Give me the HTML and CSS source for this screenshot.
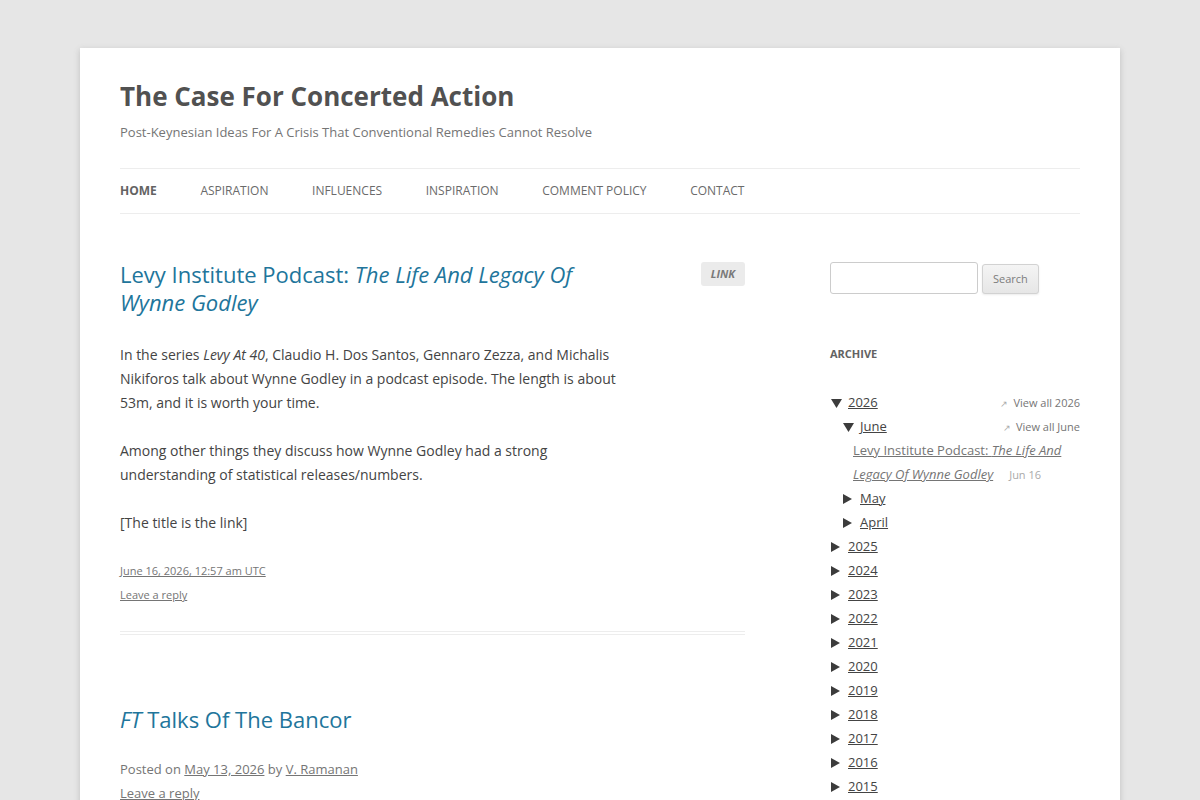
FILE: index.html
```html
<!DOCTYPE html>
<html lang="en">
<head>
<meta charset="utf-8">
<title>The Case For Concerted Action</title>
<link rel="stylesheet" href="styles.css">
</head>
<body>
<div class="site">
  <header class="site-header">
    <h1 class="site-title"><a href="#">The Case For Concerted Action</a></h1>
    <h2 class="site-description">Post-Keynesian Ideas For A Crisis That Conventional Remedies Cannot Resolve</h2>
    <nav class="main-navigation">
      <ul class="nav-menu">
        <li class="current-menu-item"><a href="#">Home</a></li>
        <li><a href="#">Aspiration</a></li>
        <li><a href="#">Influences</a></li>
        <li><a href="#">Inspiration</a></li>
        <li><a href="#">Comment Policy</a></li>
        <li><a href="#">Contact</a></li>
      </ul>
    </nav>
  </header>

  <div class="main">
    <div class="site-content">
      <article class="post format-link">
        <header class="entry-header">
          <h2 class="entry-title"><a href="#">Levy Institute Podcast: <em>The Life And Legacy Of Wynne Godley</em></a></h2>
          <span class="format-badge">Link</span>
        </header>
        <div class="entry-content">
          <p>In the series <em>Levy At 40</em>, Claudio H. Dos Santos, Gennaro Zezza, and Michalis Nikiforos talk about Wynne Godley in a podcast episode. The length is about 53m, and it is worth your time.</p>
          <p>Among other things they discuss how Wynne Godley had a strong understanding of statistical releases/numbers.</p>
          <p>[The title is the link]</p>
        </div>
        <footer class="entry-meta small">
          <div><a href="#">June 16, 2026, 12:57 am UTC</a></div>
          <div><a href="#">Leave a reply</a></div>
        </footer>
      </article>

      <article class="post">
        <header class="entry-header">
          <h2 class="entry-title"><a href="#"><em>FT</em> Talks Of The Bancor</a></h2>
        </header>
        <footer class="entry-meta">
          <div>Posted on <a href="#">May 13, 2026</a> by <a href="#">V. Ramanan</a></div>
          <div><a href="#">Leave a reply</a></div>
        </footer>
      </article>
    </div>

    <aside class="widget-area">
      <section class="widget widget-search">
        <form class="search-form">
          <input class="search-field" type="text" aria-label="Search for">
          <button class="search-submit" type="button">Search</button>
        </form>
      </section>

      <section class="widget widget-archive">
        <h3 class="widget-title">Archive</h3>
        <ul class="archive">
          <li>
            <div class="row">
              <span class="toggle"><svg width="11" height="9" viewBox="0 0 11 9"><path d="M0 0H11L5.5 9Z"/></svg></span>
              <a href="#">2026</a>
              <span class="view-all"><span class="arrow">↗</span>View all 2026</span>
            </div>
            <ul class="archive-sub">
              <li>
                <div class="row">
                  <span class="toggle"><svg width="11" height="9" viewBox="0 0 11 9"><path d="M0 0H11L5.5 9Z"/></svg></span>
                  <a href="#">June</a>
                  <span class="view-all"><span class="arrow">↗</span>View all June</span>
                </div>
                <ul class="archive-posts">
                  <li><a class="post-link" href="#">Levy Institute Podcast: <em>The Life And Legacy Of Wynne Godley</em></a><span class="post-date">Jun 16</span></li>
                </ul>
              </li>
              <li>
                <div class="row">
                  <span class="toggle"><svg width="9" height="10" viewBox="0 0 9 10"><path d="M0 0L9 5L0 10Z"/></svg></span>
                  <a href="#">May</a>
                </div>
              </li>
              <li>
                <div class="row">
                  <span class="toggle"><svg width="9" height="10" viewBox="0 0 9 10"><path d="M0 0L9 5L0 10Z"/></svg></span>
                  <a href="#">April</a>
                </div>
              </li>
            </ul>
          </li>
          <li><div class="row"><span class="toggle"><svg width="9" height="10" viewBox="0 0 9 10"><path d="M0 0L9 5L0 10Z"/></svg></span><a href="#">2025</a></div></li>
          <li><div class="row"><span class="toggle"><svg width="9" height="10" viewBox="0 0 9 10"><path d="M0 0L9 5L0 10Z"/></svg></span><a href="#">2024</a></div></li>
          <li><div class="row"><span class="toggle"><svg width="9" height="10" viewBox="0 0 9 10"><path d="M0 0L9 5L0 10Z"/></svg></span><a href="#">2023</a></div></li>
          <li><div class="row"><span class="toggle"><svg width="9" height="10" viewBox="0 0 9 10"><path d="M0 0L9 5L0 10Z"/></svg></span><a href="#">2022</a></div></li>
          <li><div class="row"><span class="toggle"><svg width="9" height="10" viewBox="0 0 9 10"><path d="M0 0L9 5L0 10Z"/></svg></span><a href="#">2021</a></div></li>
          <li><div class="row"><span class="toggle"><svg width="9" height="10" viewBox="0 0 9 10"><path d="M0 0L9 5L0 10Z"/></svg></span><a href="#">2020</a></div></li>
          <li><div class="row"><span class="toggle"><svg width="9" height="10" viewBox="0 0 9 10"><path d="M0 0L9 5L0 10Z"/></svg></span><a href="#">2019</a></div></li>
          <li><div class="row"><span class="toggle"><svg width="9" height="10" viewBox="0 0 9 10"><path d="M0 0L9 5L0 10Z"/></svg></span><a href="#">2018</a></div></li>
          <li><div class="row"><span class="toggle"><svg width="9" height="10" viewBox="0 0 9 10"><path d="M0 0L9 5L0 10Z"/></svg></span><a href="#">2017</a></div></li>
          <li><div class="row"><span class="toggle"><svg width="9" height="10" viewBox="0 0 9 10"><path d="M0 0L9 5L0 10Z"/></svg></span><a href="#">2016</a></div></li>
          <li><div class="row"><span class="toggle"><svg width="9" height="10" viewBox="0 0 9 10"><path d="M0 0L9 5L0 10Z"/></svg></span><a href="#">2015</a></div></li>
          <li><div class="row"><span class="toggle"><svg width="9" height="10" viewBox="0 0 9 10"><path d="M0 0L9 5L0 10Z"/></svg></span><a href="#">2014</a></div></li>
        </ul>
      </section>
    </aside>
  </div>
</div>
</body>
</html>
```

FILE: styles.css
```css
html {
  background: #e6e6e6;
}

body {
  margin: 0;
  background: #e6e6e6;
  font-family: "Open Sans", "Liberation Sans", sans-serif;
  font-size: 14px;
  line-height: 24px;
  color: #444;
}

a {
  color: #21759b;
}

ul {
  list-style: none;
  margin: 0;
  padding: 0;
}

/* Page sheet */
.site {
  max-width: 960px;
  margin: 48px auto;
  padding: 0 40px;
  background: #fff;
  box-shadow: 0 2px 6px rgba(100, 100, 100, 0.3);
  overflow: hidden;
}

/* Header */
.site-header {
  padding: 24px 0 0;
}

.site-title {
  margin: 0;
  font-size: 26px;
  line-height: 48px;
  font-weight: bold;
}

.site-title a {
  color: #515151;
  text-decoration: none;
}

.site-description {
  margin: 0;
  font-size: 13px;
  line-height: 24px;
  font-weight: normal;
  color: #757575;
}

.main-navigation {
  margin-top: 24px;
  border-top: 1px solid #ededed;
  border-bottom: 1px solid #ededed;
}

.nav-menu {
  display: flex;
}

.nav-menu li {
  margin-right: 43.6px;
  font-size: 12px;
  line-height: 44px;
}

.nav-menu a {
  color: #6a6a6a;
  text-decoration: none;
  text-transform: uppercase;
}

.nav-menu .current-menu-item a {
  color: #636363;
  font-weight: bold;
}

/* Two columns */
.main {
  display: flex;
  justify-content: space-between;
  padding-top: 48px;
}

.site-content {
  width: 65.104166667%;
}

.widget-area {
  width: 26.041666667%;
}

/* Posts */
.post {
  padding-bottom: 24px;
  border-bottom: 4px double #ededed;
  margin-bottom: 72px;
}

.entry-header {
  display: flex;
  align-items: flex-start;
  margin-bottom: 24px;
}

.entry-title {
  margin: -2px 0 0;
  width: 80%;
  font-size: 22px;
  line-height: 28px;
  font-weight: normal;
}

.entry-title a {
  text-decoration: none;
}

.format-badge {
  margin-left: auto;
  padding: 0 10px;
  border-radius: 3px;
  background: #ebebeb;
  color: #7a7a7a;
  font-size: 11px;
  line-height: 24px;
  font-weight: bold;
  font-style: italic;
  text-transform: uppercase;
}

.format-link .entry-header {
  margin-bottom: 27px;
}

.format-link .entry-content {
  width: 80%;
}

.entry-content p {
  margin: 0 0 24px;
}

.entry-meta {
  font-size: 13px;
  line-height: 24px;
  color: #757575;
}

.entry-meta.small {
  font-size: 11px;
}

.entry-meta a {
  color: #757575;
}

/* Sidebar */
.widget {
  margin-bottom: 48px;
}

.search-form {
  display: flex;
  align-items: flex-end;
  gap: 4px;
}

.search-field {
  box-sizing: border-box;
  width: 148px;
  height: 32px;
  padding: 6px;
  border: 1px solid #ccc;
  border-radius: 3px;
  font-family: inherit;
  font-size: 13px;
  color: #666;
}

.search-submit {
  padding: 6px 10px;
  font-family: inherit;
  font-size: 11px;
  line-height: 16px;
  color: #7c7c7c;
  background-color: #e6e6e6;
  background-image: linear-gradient(to bottom, #f4f4f4, #e6e6e6);
  border: 1px solid #d2d2d2;
  border-radius: 3px;
  box-shadow: 0 1px 2px rgba(64, 64, 64, 0.1);
}

.widget-title {
  margin: 0 0 24px;
  font-size: 11px;
  line-height: 24px;
  font-weight: bold;
  text-transform: uppercase;
  color: #636363;
}

.archive {
  font-size: 13px;
  line-height: 24px;
}

.archive a {
  color: #444;
}

.row {
  display: flex;
  align-items: baseline;
  height: 24px;
}

.toggle {
  flex: none;
  width: 18px;
  padding-left: 1px;
  box-sizing: border-box;
  line-height: 1;
}

.toggle svg {
  fill: #3c3c3c;
  display: inline-block;
  vertical-align: -1px;
}

.view-all {
  margin-left: auto;
  font-size: 11px;
  line-height: 1;
  color: #757575;
}

.view-all .arrow {
  font-size: 9px;
  line-height: 1;
  color: #aaa;
  margin-right: 5px;
}

.archive-sub {
  padding-left: 12px;
}

.archive-posts {
  padding-left: 11px;
}

.archive-posts li {
  line-height: 24px;
}

.archive .post-link {
  color: #757575;
}

.post-date {
  margin-left: 16px;
  font-size: 11px;
  line-height: 1;
  color: #aaa;
}
```
